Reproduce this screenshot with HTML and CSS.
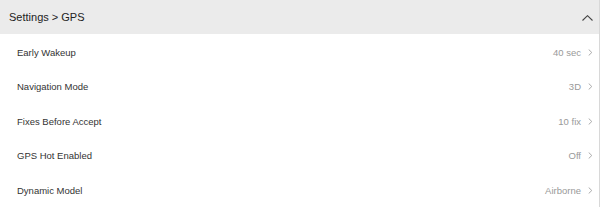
FILE: index.html
```html
<!DOCTYPE html>
<html>
<head>
<meta charset="utf-8">
<link rel="stylesheet" href="styles.css">
</head>
<body>
<div class="panel">
  <div class="header">
    <span class="title">Settings &gt; GPS</span>
    <svg class="caret" width="11" height="6" viewBox="0 0 11 6"><path d="M0.5 5.5 L5.5 0.7 L10.5 5.5" fill="none" stroke="#444" stroke-width="1.1"/></svg>
  </div>
  <div class="list">
    <div class="row"><span class="label">Early Wakeup</span><span class="value">40 sec</span><svg class="chev" width="5" height="7" viewBox="0 0 5 7"><path d="M0.7 0.5 L3.8 3.5 L0.7 6.5" fill="none" stroke="#aaa" stroke-width="1"/></svg></div>
    <div class="row"><span class="label">Navigation Mode</span><span class="value">3D</span><svg class="chev" width="5" height="7" viewBox="0 0 5 7"><path d="M0.7 0.5 L3.8 3.5 L0.7 6.5" fill="none" stroke="#aaa" stroke-width="1"/></svg></div>
    <div class="row"><span class="label">Fixes Before Accept</span><span class="value">10 fix</span><svg class="chev" width="5" height="7" viewBox="0 0 5 7"><path d="M0.7 0.5 L3.8 3.5 L0.7 6.5" fill="none" stroke="#aaa" stroke-width="1"/></svg></div>
    <div class="row"><span class="label">GPS Hot Enabled</span><span class="value">Off</span><svg class="chev" width="5" height="7" viewBox="0 0 5 7"><path d="M0.7 0.5 L3.8 3.5 L0.7 6.5" fill="none" stroke="#aaa" stroke-width="1"/></svg></div>
    <div class="row"><span class="label">Dynamic Model</span><span class="value">Airborne</span><svg class="chev" width="5" height="7" viewBox="0 0 5 7"><path d="M0.7 0.5 L3.8 3.5 L0.7 6.5" fill="none" stroke="#aaa" stroke-width="1"/></svg></div>
  </div>
</div>
</body>
</html>
```
FILE: styles.css
```css
html, body { margin: 0; padding: 0; background: #fff; }
body { font-family: "Liberation Sans", Arial, sans-serif; }
.panel { width: 600px; height: 207px; box-sizing: border-box; border-right: 1px solid #d8d8d8; overflow: hidden; }
.header { height: 34px; background: #ebebeb; display: flex; align-items: center; justify-content: space-between; padding: 0 6px 0 9px; }
.title { font-size: 11px; color: #222; }
.caret { margin-top: 1px; }
.list { padding-top: 1px; }
.row { height: 34.5px; display: flex; align-items: center; padding: 0 6px 0 17px; }
.label { font-size: 9.5px; color: #333; flex: 1; }
.value { font-size: 9.5px; color: #999; margin-right: 7px; }
.chev { display: block; }
```
